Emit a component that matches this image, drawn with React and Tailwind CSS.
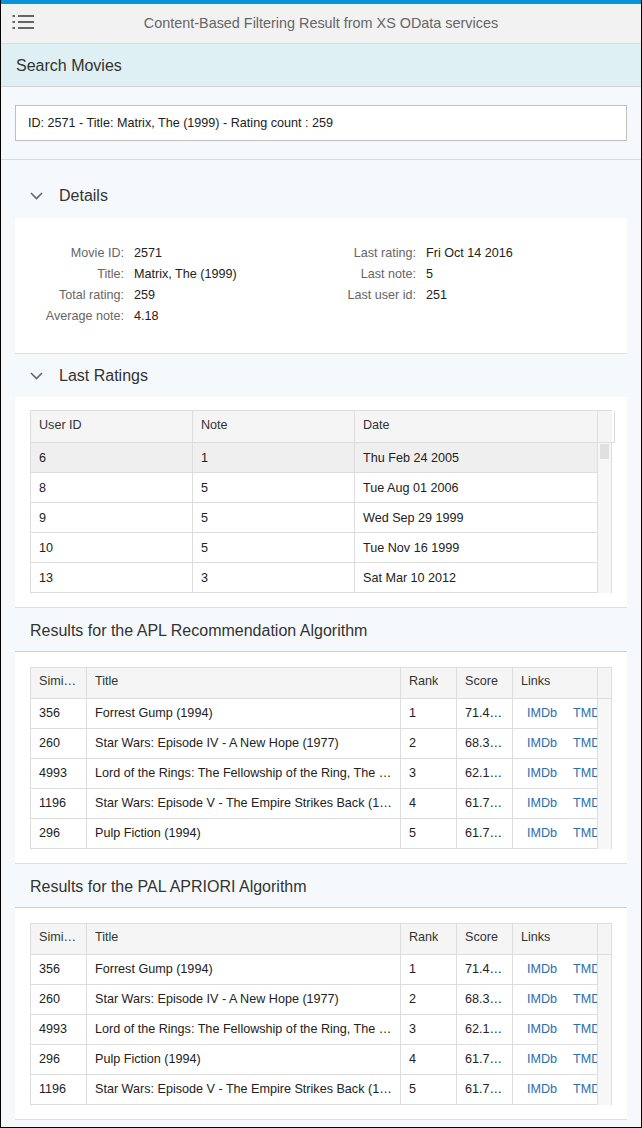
const ratings = [
  ['6', '1', 'Thu Feb 24 2005'],
  ['8', '5', 'Tue Aug 01 2006'],
  ['9', '5', 'Wed Sep 29 1999'],
  ['10', '5', 'Tue Nov 16 1999'],
  ['13', '3', 'Sat Mar 10 2012'],
]

const aplResults = [
  ['356', 'Forrest Gump (1994)', '1', '71.42857'],
  ['260', 'Star Wars: Episode IV - A New Hope (1977)', '2', '68.33333'],
  ['4993', 'Lord of the Rings: The Fellowship of the Ring, The (2001)', '3', '62.19512'],
  ['1196', 'Star Wars: Episode V - The Empire Strikes Back (1980)', '4', '61.76470'],
  ['296', 'Pulp Fiction (1994)', '5', '61.70212'],
]

const palResults = [
  ['356', 'Forrest Gump (1994)', '1', '71.42857'],
  ['260', 'Star Wars: Episode IV - A New Hope (1977)', '2', '68.33333'],
  ['4993', 'Lord of the Rings: The Fellowship of the Ring, The (2001)', '3', '62.19512'],
  ['296', 'Pulp Fiction (1994)', '4', '61.70212'],
  ['1196', 'Star Wars: Episode V - The Empire Strikes Back (1980)', '5', '61.76470'],
]

function MenuIcon() {
  return (
    <svg width="22" height="16" viewBox="0 0 22 16" fill="#666">
      <rect x="0.5" y="1" width="2.5" height="2" />
      <rect x="6" y="1" width="16" height="2" />
      <rect x="0.5" y="7" width="2.5" height="2" />
      <rect x="6" y="7" width="16" height="2" />
      <rect x="0.5" y="13" width="2.5" height="2" />
      <rect x="6" y="13" width="16" height="2" />
    </svg>
  )
}

function Chevron() {
  return (
    <svg width="13" height="8" viewBox="0 0 13 8" fill="none" stroke="#666" strokeWidth="1.6">
      <polyline points="1,1 6.5,6.5 12,1" />
    </svg>
  )
}

function Details() {
  const left = [
    ['Movie ID:', '2571'],
    ['Title:', 'Matrix, The (1999)'],
    ['Total rating:', '259'],
    ['Average note:', '4.18'],
  ]
  const right = [
    ['Last rating:', 'Fri Oct 14 2016'],
    ['Last note:', '5'],
    ['Last user id:', '251'],
  ]
  const col = (items, labelW) => (
    <div className="flex flex-col">
      {items.map(([l, v]) => (
        <div key={l} className="flex h-[21px] items-center gap-[10px]">
          <span className={`${labelW} text-right text-[#666]`}>{l}</span>
          <span className="text-[#222]">{v}</span>
        </div>
      ))}
    </div>
  )
  return (
    <div className="grid grid-cols-2 bg-white pt-[25px] pb-[26px] border-b border-[#dedede] text-[12.6px]">
      {col(left, 'w-[109px]')}
      {col(right, 'w-[95px]')}
    </div>
  )
}

function RatingsTable() {
  const cols = 'grid-cols-[162px_162px_243px_16px]'
  return (
    <div className="border-l border-t border-[#ddd] text-[12.6px]">
      <div className={`grid ${cols} h-[32px] bg-[#f5f5f5] text-[#333]`}>
        {['User ID', 'Note', 'Date', ''].map((h, i) => (
          <div key={i} className="flex items-center px-2 pb-[2px] border-r border-b border-[#ddd]">{h}</div>
        ))}
      </div>
      <div className="flex">
        <div className="flex flex-col">
          {ratings.map((r, i) => (
            <div key={i} className={`grid grid-cols-[162px_162px_243px] h-[30px] ${i === 0 ? 'bg-[#efefef]' : 'bg-white'}`}>
              {r.map((c, j) => (
                <div key={j} className="flex items-center px-2 pt-[2px] border-r border-b border-[#ddd] text-[#222]">{c}</div>
              ))}
            </div>
          ))}
        </div>
        <div className="w-[16px] bg-[#f7f7f7] border-r border-[#ddd] pt-[1px] px-[2px]">
          <div className="h-[15px] bg-[#e0e0e0]" />
        </div>
      </div>
    </div>
  )
}

function ResultsTable({ rows }) {
  const cols = 'grid-cols-[56px_314px_56px_56px_85px]'
  return (
    <div className="border-l border-t border-[#ddd] text-[12.6px]">
      <div className="flex h-[31px] bg-[#f5f5f5] text-[#333]">
        <div className={`grid ${cols}`}>
          {['Similarity', 'Title', 'Rank', 'Score', 'Links'].map((h) => (
            <div key={h} className="flex items-center px-2 pb-[4px] border-r border-b border-[#ddd] overflow-hidden">
              <span className="truncate">{h}</span>
            </div>
          ))}
        </div>
        <div className="w-[16px] border-r border-b border-[#ddd]" />
      </div>
      <div className="flex">
        <div className="flex flex-col">
          {rows.map((r) => (
            <div key={r[0]} className={`grid ${cols} h-[30px] bg-white text-[#222]`}>
              {r.map((c, j) => (
                <div key={j} className="flex items-center px-2 border-r border-b border-[#ddd] overflow-hidden">
                  <span className="truncate">{c}</span>
                </div>
              ))}
              <div className="flex items-center gap-[16px] pl-[14px] border-r border-b border-[#ddd] overflow-hidden whitespace-nowrap text-[#2a6fae]">
                <span>IMDb</span>
                <span>TMDb</span>
              </div>
            </div>
          ))}
        </div>
        <div className="w-[16px] bg-[#f7f7f7] border-r border-[#ddd]" />
      </div>
    </div>
  )
}

function ResultsSection({ title, rows }) {
  return (
    <>
      <div className="flex h-[44px] items-center px-[15px] pt-[2px] border-b border-[#cfcfcf] text-[16px] text-[#333]">
        {title}
      </div>
      <div className="bg-white px-[15px] pt-[15px] pb-[14px] border-b border-[#dedede]">
        <ResultsTable rows={rows} />
      </div>
    </>
  )
}

export default function App() {
  return (
    <div className="w-[642px] h-[1128px] overflow-hidden border-x border-b border-black bg-[#f6f9fb] font-['Liberation_Sans',Arial,sans-serif]">
      <div className="h-[4px] bg-[#0a93d8]" />
      {/* Shell header */}
      <div className="relative flex h-[40px] items-center justify-center bg-[#f2f2f2] border-b border-[#d9d9d9]">
        <div className="absolute left-[11px] top-[10px]">
          <MenuIcon />
        </div>
        <span className="text-[14.4px] text-[#666]">Content-Based Filtering Result from XS OData services</span>
      </div>
      <div className="flex h-[43px] items-center px-[15px] pt-[2px] bg-[#dff0f4] border-b border-[#d3d3d3] text-[16px] text-[#333]">
        Search Movies
      </div>

      <div className="px-[14px] pt-[18px] pb-[18px] border-b border-[#d9d9d9]">
        <div className="flex h-[36px] items-center px-[12px] bg-white border border-[#bfbfbf] text-[12.6px] text-[#222]">
          ID: 2571 - Title: Matrix, The (1999) - Rating count : 259
        </div>
      </div>

      <div className="mx-[14px]">
        <div className="flex h-[58px] items-center gap-[16px] pt-[14px] px-[15px] text-[16px] text-[#333]">
          <Chevron />
          <span>Details</span>
        </div>
        <Details />

        <div className="flex h-[43px] items-center gap-[16px] pt-[1px] px-[15px] text-[16px] text-[#333]">
          <Chevron />
          <span>Last Ratings</span>
        </div>
        <div className="bg-white px-[15px] pt-[13px] pb-[14px] border-b border-[#dedede]">
          <RatingsTable />
        </div>

        <ResultsSection title="Results for the APL Recommendation Algorithm" rows={aplResults} />
        <ResultsSection title="Results for the PAL APRIORI Algorithm" rows={palResults} />
      </div>
    </div>
  )
}
